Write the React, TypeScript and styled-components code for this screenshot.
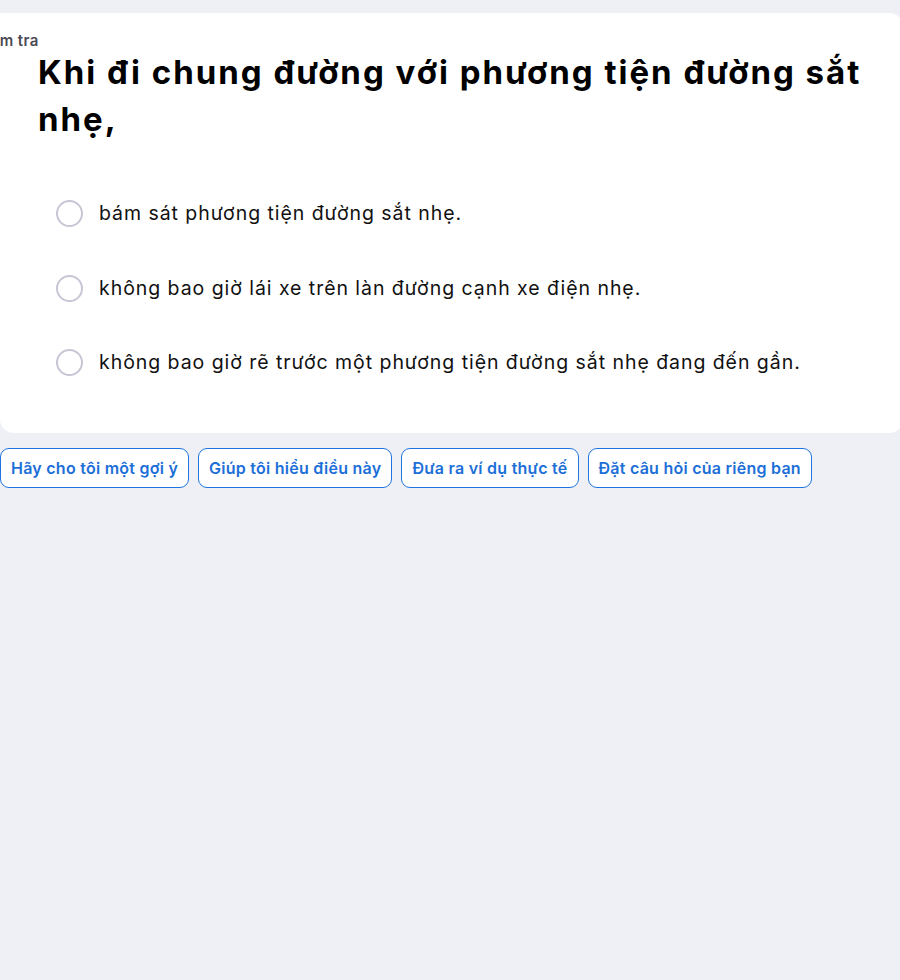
import React from "react";
import styled, { createGlobalStyle } from "styled-components";

const Global = createGlobalStyle`
  html, body {
    margin: 0;
    padding: 0;
    background: #eff0f5;
    overflow-x: hidden;
  }
  body {
    font-family: "Inter", "Noto Sans", sans-serif;
    -webkit-font-smoothing: antialiased;
  }
`;

const Page = styled.div`
  width: 900px;
  min-height: 980px;
  padding-top: 13px;
  box-sizing: border-box;
  overflow: hidden;
`;

const Card = styled.section`
  width: 903px;
  background: #ffffff;
  border-radius: 0 14px 14px 14px;
  padding: 20px 0 57px 0;
  box-sizing: border-box;
`;

const Eyebrow = styled.div`
  margin-left: -25px;
  font-size: 15px;
  font-weight: 600;
  letter-spacing: 0.4px;
  color: #4a4a55;
  line-height: 16px;
`;

const Question = styled.h1`
  margin: 0 0 0 38px;
  padding-right: 30px;
  font-size: 33px;
  font-weight: 700;
  letter-spacing: 2px;
  line-height: 47px;
  color: #000000;
`;

const Options = styled.div`
  margin-top: 57px;
  display: flex;
  flex-direction: column;
  gap: 47.5px;
  padding-left: 56px;
`;

const Option = styled.label`
  display: flex;
  align-items: center;
  gap: 16px;
  font-size: 19.5px;
  letter-spacing: 0.95px;
  color: #111111;
  line-height: 27px;
  cursor: pointer;
`;

const Radio = styled.span`
  width: 27px;
  height: 27px;
  border-radius: 50%;
  border: 2px solid #c6c6d6;
  box-sizing: border-box;
  flex-shrink: 0;
`;

const Chips = styled.div`
  display: flex;
  gap: 9px;
  margin-top: 15px;
`;

const Chip = styled.button`
  height: 40px;
  padding: 0 10px;
  border: 1px solid #1f75e0;
  border-radius: 9px;
  background: #ffffff;
  color: #1d6fd8;
  font-family: "Inter", "Noto Sans", sans-serif;
  font-size: 16px;
  font-weight: 600;
  letter-spacing: 0.25px;
  cursor: pointer;
  white-space: nowrap;
`;

const options = [
  "bám sát phương tiện đường sắt nhẹ.",
  "không bao giờ lái xe trên làn đường cạnh xe điện nhẹ.",
  "không bao giờ rẽ trước một phương tiện đường sắt nhẹ đang đến gần.",
];

const chips = [
  "Hãy cho tôi một gợi ý",
  "Giúp tôi hiểu điều này",
  "Đưa ra ví dụ thực tế",
  "Đặt câu hỏi của riêng bạn",
];

export default function App() {
  return (
    <>
      <Global />
      <Page>
        <Card>
          <Eyebrow>Kiểm tra</Eyebrow>
          <Question>Khi đi chung đường với phương tiện đường sắt nhẹ,</Question>
          <Options>
            {options.map((o) => (
              <Option key={o}>
                <Radio />
                {o}
              </Option>
            ))}
          </Options>
        </Card>
        <Chips>
          {chips.map((c) => (
            <Chip key={c}>{c}</Chip>
          ))}
        </Chips>
      </Page>
    </>
  );
}
